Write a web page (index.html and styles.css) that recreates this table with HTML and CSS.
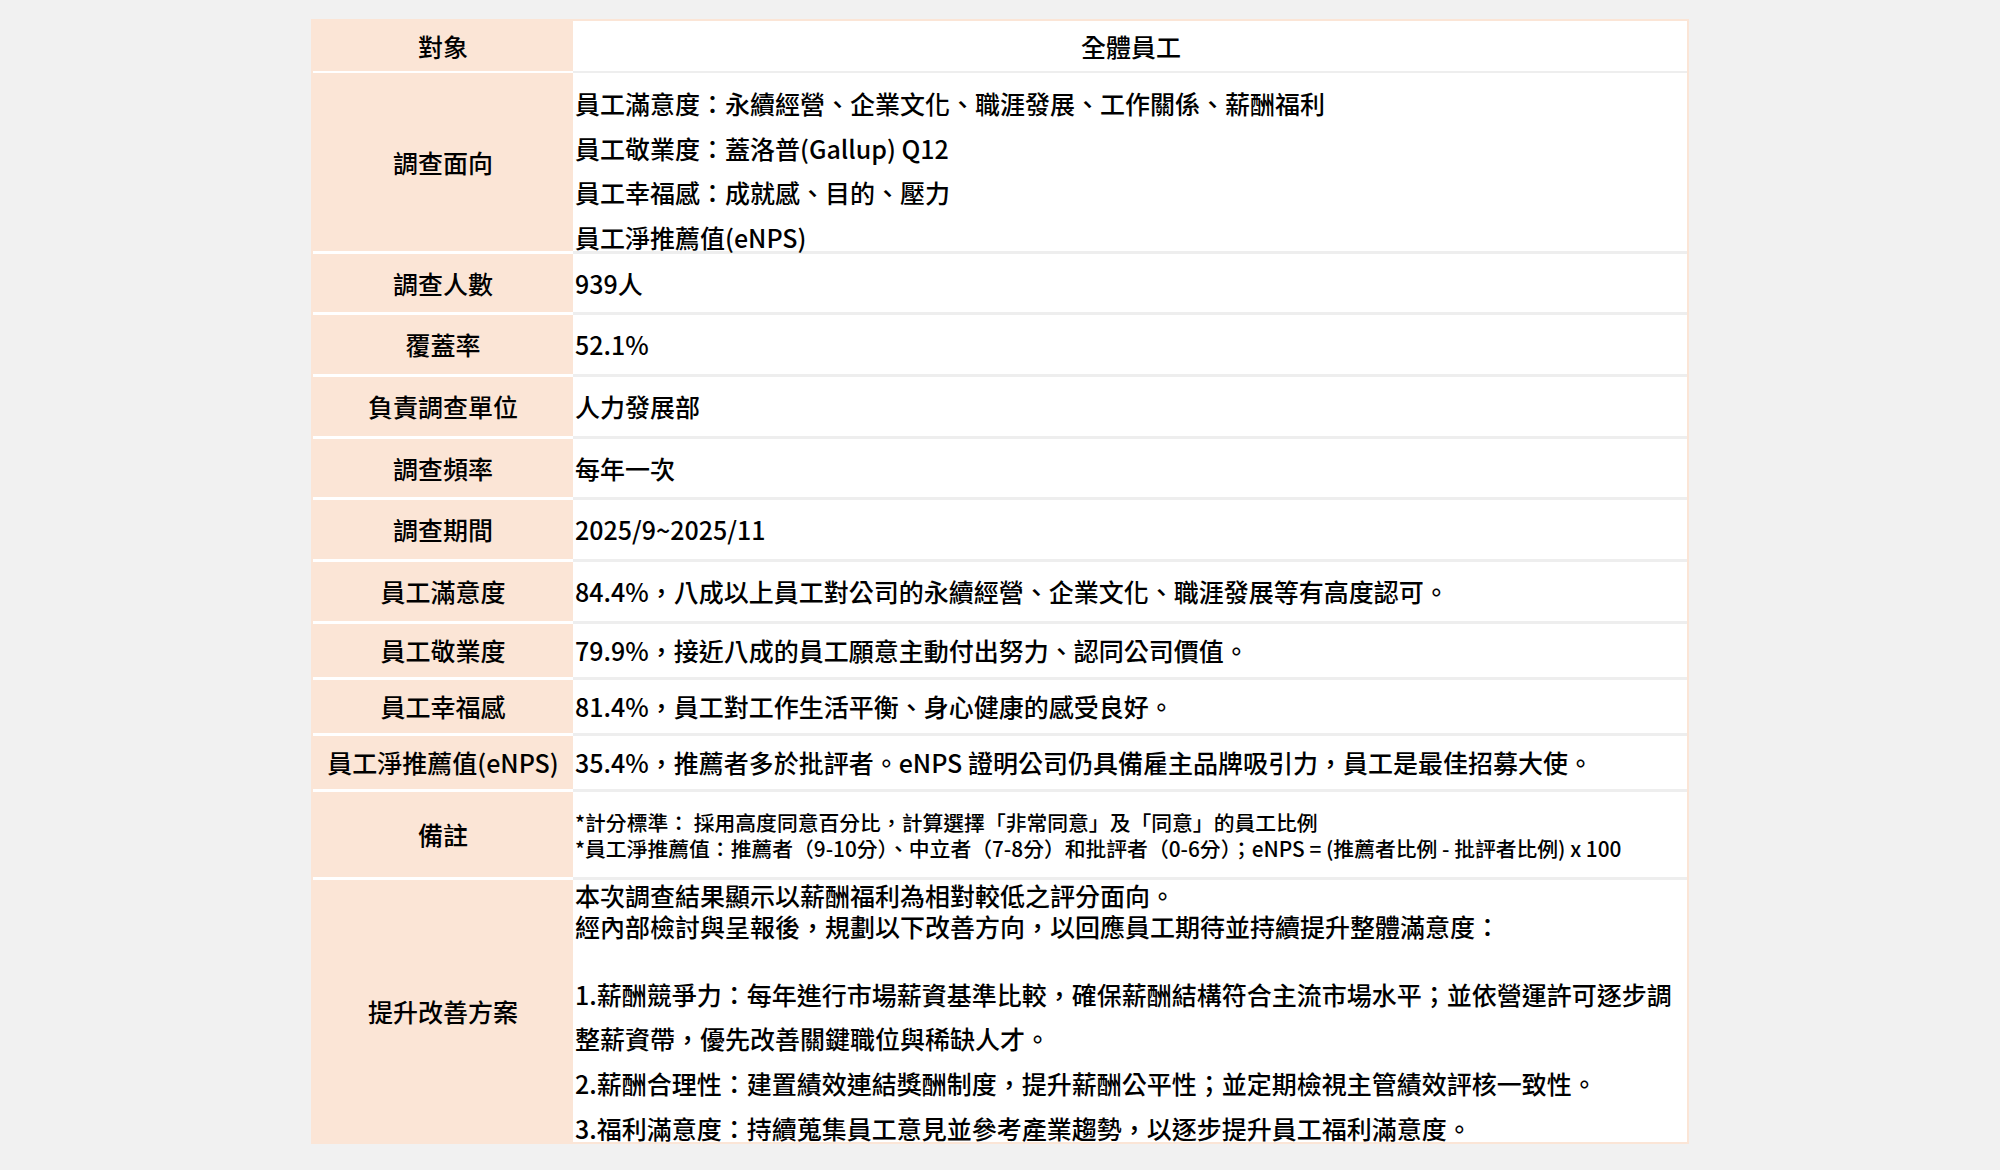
FILE: index.html
```html
<!DOCTYPE html>
<html lang="zh-Hant">
<head>
<meta charset="utf-8">
<title>員工意見調查</title>
<link rel="stylesheet" href="styles.css">
</head>
<body>
<div class="sheet">
  <div class="k row-target">對象</div>
  <div class="v row-target center">全體員工</div>

  <div class="k row-aspect">調查面向</div>
  <div class="v row-aspect top list">
    <p>員工滿意度：永續經營、企業文化、職涯發展、工作關係、薪酬福利</p>
    <p>員工敬業度：蓋洛普(Gallup) Q12</p>
    <p>員工幸福感：成就感、目的、壓力</p>
    <p>員工淨推薦值(eNPS)</p>
  </div>

  <div class="k row-a">調查人數</div>
  <div class="v row-a">939人</div>

  <div class="k row-b">覆蓋率</div>
  <div class="v row-b">52.1%</div>

  <div class="k row-b">負責調查單位</div>
  <div class="v row-b">人力發展部</div>

  <div class="k row-a">調查頻率</div>
  <div class="v row-a">每年一次</div>

  <div class="k row-b">調查期間</div>
  <div class="v row-b">2025/9~2025/11</div>

  <div class="k row-b">員工滿意度</div>
  <div class="v row-b">84.4%，八成以上員工對公司的永續經營、企業文化、職涯發展等有高度認可。</div>

  <div class="k row-c">員工敬業度</div>
  <div class="v row-c">79.9%，接近八成的員工願意主動付出努力、認同公司價值。</div>

  <div class="k row-c">員工幸福感</div>
  <div class="v row-c">81.4%，員工對工作生活平衡、身心健康的感受良好。</div>

  <div class="k row-c">員工淨推薦值(eNPS)</div>
  <div class="v row-c">35.4%，推薦者多於批評者。eNPS 證明公司仍具備雇主品牌吸引力，員工是最佳招募大使。</div>

  <div class="k row-note">備註</div>
  <div class="v row-note note">
    <p>*計分標準： 採用高度同意百分比，計算選擇「非常同意」及「同意」的員工比例</p>
    <p>*員工淨推薦值：推薦者（9-10分）、中立者（7-8分）和批評者（0-6分）；eNPS = (推薦者比例 - 批評者比例) x 100</p>
  </div>

  <div class="k row-plan last">提升改善方案</div>
  <div class="v row-plan last top plan">
    <div class="intro">
      <p>本次調查結果顯示以薪酬福利為相對較低之評分面向。</p>
      <p>經內部檢討與呈報後，規劃以下改善方向，以回應員工期待並持續提升整體滿意度：</p>
    </div>
    <p>1.薪酬競爭力：每年進行市場薪資基準比較，確保薪酬結構符合主流市場水平；並依營運許可逐步調整薪資帶，優先改善關鍵職位與稀缺人才。</p>
    <p>2.薪酬合理性：建置績效連結獎酬制度，提升薪酬公平性；並定期檢視主管績效評核一致性。</p>
    <p>3.福利滿意度：持續蒐集員工意見並參考產業趨勢，以逐步提升員工福利滿意度。</p>
  </div>
</div>
</body>
</html>
```

FILE: styles.css
```css
html, body {
  margin: 0;
  padding: 0;
  background: #f1f1f1;
}

body {
  padding-top: 19px;
  font-family: "Noto Sans CJK TC", "Noto Sans", sans-serif;
  color: #000;
}

p {
  margin: 0;
}

.sheet {
  box-sizing: border-box;
  width: 1378px;
  margin: 0 auto;
  border: 2px solid #fbe5d6;
  background: #fff;
  display: grid;
  grid-template-columns: 260px 1fr;
  font-size: 25px;
  font-weight: 500;
}

.k,
.v {
  box-sizing: border-box;
  display: flex;
  flex-direction: column;
  justify-content: center;
  line-height: 44.6px;
  white-space: nowrap;
}

.k {
  background: #fbe5d6;
  border-bottom: 3px solid #ffffff;
  align-items: center;
  text-align: center;
}

.v {
  border-bottom: 3px solid #eeeeee;
  padding-left: 2px;
  align-items: flex-start;
}

.v.center {
  align-items: center;
}

.v.top {
  justify-content: flex-start;
}

.last {
  border-bottom: 0;
}

.row-target { height: 52px; }
.row-target.k, .row-target.v { border-bottom-width: 2px; }
.row-aspect { height: 181px; }
.row-a { height: 61px; }
.row-b { height: 62px; }
.row-c { height: 56px; }
.row-note { height: 88px; }
.row-plan { height: 262px; }

.list {
  padding-top: 8px;
}

.note {
  font-size: 20.8px;
  line-height: 25.5px;
  padding-top: 2px;
}

.plan {
  white-space: normal;
  line-height: 44.9px;
}

.intro {
  line-height: 30.5px;
  margin-bottom: 30.5px;
}
```
